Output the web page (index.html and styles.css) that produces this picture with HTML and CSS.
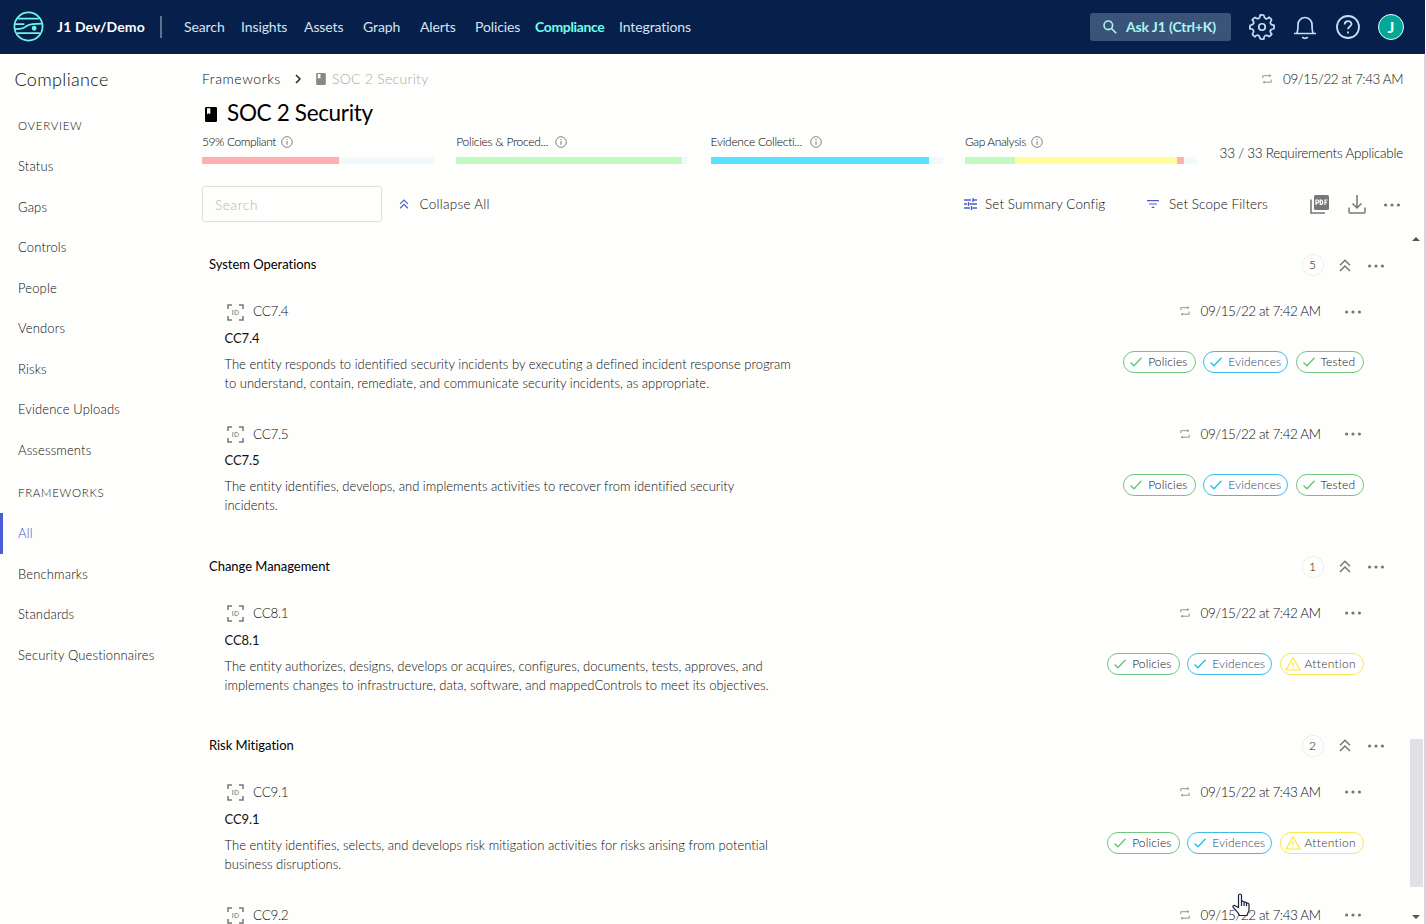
FILE: index.html
```html
<!DOCTYPE html>
<html lang="en">
<head>
<meta charset="utf-8">
<title>SOC 2 Security - Compliance</title>
<link rel="stylesheet" href="styles.css">
</head>
<body>
<svg class="sprite" aria-hidden="true">
  <symbol id="repeat" viewBox="0 0 10 10"><path d="M.8 4.2V1.7H9M7.8.4v2.4M9.2 5.6v2.6H1M2.2 7v2.4" fill="none" stroke="currentColor" stroke-width=".9"/></symbol>
  <symbol id="book" viewBox="0 0 12 15"><path fill="currentColor" fill-rule="evenodd" d="M1.2 0h9.6A1.2 1.2 0 0 1 12 1.2v12.6a1.2 1.2 0 0 1-1.2 1.2H1.2A1.2 1.2 0 0 1 0 13.8V1.2A1.2 1.2 0 0 1 1.2 0zM2 1.300v6L3.500 6.200l1.800 1.100v-6z"/></symbol>
  <symbol id="info" viewBox="0 0 12 12"><circle cx="6" cy="6" r="5.300" fill="none" stroke="currentColor" stroke-width=".9"/><path d="M6 5.200v3.600M6 3v1.100" stroke="currentColor" stroke-width="1"/></symbol>
  <symbol id="up2" viewBox="0 0 12 13"><path d="M1 6.300 6 1.300l5 5M1 12l5-5 5 5" fill="none" stroke="currentColor" stroke-width="1.500"/></symbol>
  <symbol id="dots" viewBox="0 0 18 4"><circle cx="2.600" cy="2" r="1.600" fill="currentColor"/><circle cx="9" cy="2" r="1.600" fill="currentColor"/><circle cx="15.400" cy="2" r="1.600" fill="currentColor"/></symbol>
  <symbol id="idbox" viewBox="0 0 17 17"><path d="M1 5V1h4M12 1h4v4M16 12v4h-4M5 16H1v-4" fill="none" stroke="currentColor" stroke-width="1.500"/><path d="M5.800 6v5M8 6.400v4.200h1.400c3 0 3-4.200 0-4.200z" fill="none" stroke="currentColor" stroke-width=".8"/></symbol>
  <symbol id="check" viewBox="0 0 12 10"><path d="M.5 5.500 4 8.800 11.500.8" fill="none" stroke="currentColor" stroke-width="1.300"/></symbol>
  <symbol id="warn" viewBox="0 0 16 14"><path d="M8 1 15 13H1zM8 5v4M8 10.200v1.400" fill="none" stroke="currentColor" stroke-width="1.200"/></symbol>
</svg>

<header class="topbar">
  <svg class="logo" viewBox="0 0 30 30" fill="none" stroke="#6ff5ea" stroke-width="1.700"><circle cx="15" cy="15" r="13.600"/><path d="M5 7.300h20M2 12.600h9M2 17.500c6.500 0 8.500-.8 12-3.400 2.500-1.700 5-1.900 14-1.900M4 21.300h22"/><circle cx="20.500" cy="16.700" r="1.500" fill="#6ff5ea"/></svg>
  <span class="org">J1 Dev/Demo</span>
  <span class="divider"></span>
  <nav class="topnav"><a>Search</a><a>Insights</a><a>Assets</a><a>Graph</a><a>Alerts</a><a>Policies</a><a class="on">Compliance</a><a>Integrations</a></nav>
  <div class="tools">
    <button class="ask"><svg width="14" height="14" viewBox="0 0 14 14" fill="none" stroke="currentColor" stroke-width="1.600"><circle cx="5.300" cy="5.300" r="4.300"/><path d="m8.500 8.500 4.700 4.700"/></svg>Ask J1 (Ctrl+K)</button>
    <svg class="gear" viewBox="-12 -12 24 24" fill="none" stroke="currentColor" stroke-width="1.600" stroke-linecap="round" stroke-linejoin="round"><defs><path id="tooth" d="M-1.600-10.900Q0-11.500 1.600-10.900C2.300-7.300 4-6.700 6.580-8.840"/></defs><circle r="3"/><use href="#tooth"/><use href="#tooth" transform="rotate(45)"/><use href="#tooth" transform="rotate(90)"/><use href="#tooth" transform="rotate(135)"/><use href="#tooth" transform="rotate(180)"/><use href="#tooth" transform="rotate(225)"/><use href="#tooth" transform="rotate(270)"/><use href="#tooth" transform="rotate(315)"/></svg>
    <svg class="bell" viewBox="0 0 24 26" fill="none" stroke="currentColor" stroke-width="1.700"><path d="M1 19.500h22M3.500 19.500c1.500-1.500 1.500-3 1.500-9a7 7 0 0 1 14 0c0 6 0 7.500 1.500 9M9.300 23c1.200 1.800 4.200 1.800 5.400 0"/></svg>
    <svg class="help" viewBox="0 0 24 24" fill="none" stroke="currentColor" stroke-width="1.800"><circle cx="12" cy="12" r="11"/><path d="M8.700 9.500c0-4.500 6.800-4.300 6.800-.4 0 2.500-3.500 2.300-3.500 5.100M12 16.500v2"/></svg>
    <span class="avatar">J</span>
  </div>
</header>

<div class="page">
  <aside class="sidebar">
    <h2>Compliance</h2>
    <h3>OVERVIEW</h3>
    <a>Status</a><a>Gaps</a><a>Controls</a><a>People</a><a>Vendors</a><a>Risks</a><a>Evidence Uploads</a><a>Assessments</a>
    <h3 class="second">FRAMEWORKS</h3>
    <a class="active">All</a><a>Benchmarks</a><a>Standards</a><a>Security Questionnaires</a>
  </aside>

  <main class="main">
    <div class="crumbs">
      <span>Frameworks</span>
      <svg class="chev" viewBox="0 0 6 10"><path d="m1 1 4 4-4 4" fill="none" stroke="#222" stroke-width="1.500"/></svg>
      <svg class="book-sm"><use href="#book"/></svg><span class="here">SOC 2 Security</span>
      <span class="synced"><svg class="rep"><use href="#repeat"/></svg>09/15/22 at 7:43 AM</span>
    </div>
    <h1><svg class="book-lg"><use href="#book"/></svg>SOC 2 Security</h1>

    <div class="stats">
      <div class="stat"><div class="label"><span>59% Compliant</span><svg class="info"><use href="#info"/></svg></div><div class="bar"><i class="red" style="width:59%"></i></div></div>
      <div class="stat"><div class="label"><span class="cut">Policies &amp; Proced...</span><svg class="info"><use href="#info"/></svg></div><div class="bar"><i class="green" style="width:97.400%"></i></div></div>
      <div class="stat"><div class="label"><span class="cut">Evidence Collecti...</span><svg class="info"><use href="#info"/></svg></div><div class="bar"><i class="blue" style="width:94%"></i></div></div>
      <div class="stat"><div class="label"><span>Gap Analysis</span><svg class="info"><use href="#info"/></svg></div><div class="bar"><i class="green" style="width:21.700%"></i><i class="yellow" style="width:69.600%"></i><i class="red" style="width:3%"></i></div></div>
      <div class="applicable">33 / 33 Requirements Applicable</div>
    </div>

    <div class="toolbar">
      <div class="search">Search</div>
      <span class="act collapse"><svg class="up-sm"><use href="#up2"/></svg>Collapse All</span>
      <span class="act summary"><svg width="13" height="12" viewBox="0 0 13 12" fill="none" stroke="#4b5cc8" stroke-width="1.300"><path d="M0 2h7M9.500 2H13M9 0v4M0 6h3M5.500 6H13M4.500 4v4M0 10h6M8.500 10H13M7.500 8v4"/></svg>Set Summary Config</span>
      <span class="act scope"><svg width="12" height="8" viewBox="0 0 12 8" fill="none" stroke="#4b5cc8" stroke-width="1.200"><path d="M0 .7h12M2 4h8M4.700 7.300h2.600"/></svg>Set Scope Filters</span>
      <svg class="pdf" viewBox="0 0 19 19"><path d="M1 4.500V18h14" fill="none" stroke="#777" stroke-width="1.600"/><rect x="4" y="0" width="15" height="15" rx="1.500" fill="#777"/><path d="M6 10V5h1.500a1.400 1.400 0 0 1 0 2.800H6M10.300 5v4.500h.8c2 0 2-4.500 0-4.500zM15 10V5h2.500M15 7.500h2" fill="none" stroke="#fff" stroke-width="1.200"/></svg>
      <svg class="down" viewBox="0 0 18 19" fill="none" stroke="#777" stroke-width="1.500"><path d="M9 0v13M4.500 8.500 9 13l4.500-4.500M1 12.500V17q0 1 1 1h14q1 0 1-1v-4.500"/></svg>
      <svg class="dots"><use href="#dots"/></svg>
    </div>

    <div class="list">
      <section>
        <div class="sec-head"><h4>System Operations</h4><span class="count">5</span><svg class="up"><use href="#up2"/></svg><svg class="dots"><use href="#dots"/></svg></div>
        <article>
          <div class="row"><svg class="idbox"><use href="#idbox"/></svg><span class="ref">CC7.4</span><span class="when"><svg class="rep"><use href="#repeat"/></svg>09/15/22 at 7:42 AM</span><svg class="dots"><use href="#dots"/></svg></div>
          <div class="body"><div class="copy"><h5>CC7.4</h5><p>The entity responds to identified security incidents by executing a defined incident response program<br>to understand, contain, remediate, and communicate security incidents, as appropriate.</p></div>
          <div class="tags"><span class="tag g"><svg class="check"><use href="#check"/></svg>Policies</span><span class="tag b"><svg class="check"><use href="#check"/></svg>Evidences</span><span class="tag g t"><svg class="check"><use href="#check"/></svg>Tested</span></div></div>
        </article>
        <article>
          <div class="row"><svg class="idbox"><use href="#idbox"/></svg><span class="ref">CC7.5</span><span class="when"><svg class="rep"><use href="#repeat"/></svg>09/15/22 at 7:42 AM</span><svg class="dots"><use href="#dots"/></svg></div>
          <div class="body"><div class="copy"><h5>CC7.5</h5><p>The entity identifies, develops, and implements activities to recover from identified security<br>incidents.</p></div>
          <div class="tags"><span class="tag g"><svg class="check"><use href="#check"/></svg>Policies</span><span class="tag b"><svg class="check"><use href="#check"/></svg>Evidences</span><span class="tag g t"><svg class="check"><use href="#check"/></svg>Tested</span></div></div>
        </article>
      </section>
      <section>
        <div class="sec-head"><h4>Change Management</h4><span class="count">1</span><svg class="up"><use href="#up2"/></svg><svg class="dots"><use href="#dots"/></svg></div>
        <article>
          <div class="row"><svg class="idbox"><use href="#idbox"/></svg><span class="ref">CC8.1</span><span class="when"><svg class="rep"><use href="#repeat"/></svg>09/15/22 at 7:42 AM</span><svg class="dots"><use href="#dots"/></svg></div>
          <div class="body"><div class="copy"><h5>CC8.1</h5><p>The entity authorizes, designs, develops or acquires, configures, documents, tests, approves, and<br>implements changes to infrastructure, data, software, and mappedControls to meet its objectives.</p></div>
          <div class="tags"><span class="tag g"><svg class="check"><use href="#check"/></svg>Policies</span><span class="tag b"><svg class="check"><use href="#check"/></svg>Evidences</span><span class="tag y"><svg class="warn"><use href="#warn"/></svg>Attention</span></div></div>
        </article>
      </section>
      <section>
        <div class="sec-head"><h4>Risk Mitigation</h4><span class="count">2</span><svg class="up"><use href="#up2"/></svg><svg class="dots"><use href="#dots"/></svg></div>
        <article>
          <div class="row"><svg class="idbox"><use href="#idbox"/></svg><span class="ref">CC9.1</span><span class="when"><svg class="rep"><use href="#repeat"/></svg>09/15/22 at 7:43 AM</span><svg class="dots"><use href="#dots"/></svg></div>
          <div class="body"><div class="copy"><h5>CC9.1</h5><p class="wide">The entity identifies, selects, and develops risk mitigation activities for risks arising from potential<br>business disruptions.</p></div>
          <div class="tags"><span class="tag g"><svg class="check"><use href="#check"/></svg>Policies</span><span class="tag b"><svg class="check"><use href="#check"/></svg>Evidences</span><span class="tag y"><svg class="warn"><use href="#warn"/></svg>Attention</span></div></div>
        </article>
        <article class="last">
          <div class="row"><svg class="idbox"><use href="#idbox"/></svg><span class="ref">CC9.2</span><span class="when"><svg class="rep"><use href="#repeat"/></svg>09/15/22 at 7:43 AM</span><svg class="dots"><use href="#dots"/></svg></div>
        </article>
      </section>
    </div>
  </main>
  <div class="scroll"><i class="arrow-up"></i><i class="thumb"></i><i class="arrow-down"></i></div>
</div>
<svg class="cursor" viewBox="0 0 18 24"><path d="M6.500 14.500V2.500c0-2 3-2 3 0v6.300c.8-1 2.500-.6 2.600.6.900-.7 2.300-.3 2.400.9.900-.5 2.500 0 2.500 1.500V17c0 1.500-1.500 3-2 5.500H7.500C7 20.500 4 17.500 1.200 14.300c-.8-1.300.8-2.500 2-1.500zM9.500 9v4M12.100 9.400V13M14.500 10.300v3" fill="#fff" stroke="#14203a" stroke-width="1.200"/></svg>
</body>
</html>
```

FILE: styles.css
```css
* { box-sizing: border-box; }
body {
  margin: 0; height: 924px; overflow: hidden; position: relative;
  background: #fefefc; color: #0c0c0c;
  font: 300 14px/20px Lato, "Open Sans", sans-serif;
}
h1, h2, h3, h4, h5, p { margin: 0; font-weight: inherit; font-size: inherit; }
svg { display: block; flex: none; }
.sprite { position: absolute; width: 0; height: 0; }

.topbar { height: 54px; display: flex; align-items: center; padding: 0 21px 0 13px; background: #06204b; color: #d5e3f0; width: 1425px; }
.logo { width: 31px; height: 31px; margin-top: -1px; }
.org { width: 88px; margin-left: 13px; font-weight: 700; color: #fff; white-space: nowrap; letter-spacing: .12px; }
.divider { width: 2px; height: 22px; margin: 0 22px 0 15px; background: #5d7290; }
.topnav { display: grid; grid-template-columns: 57px 63px 59px 57px 55px 60px 84px 74px; font-weight: 400; white-space: nowrap; letter-spacing: -.1px; }
.topnav .on { color: #6ffff0; font-weight: 700; letter-spacing: -.35px; }
.tools { margin-left: auto; display: flex; align-items: center; }
.ask { width: 141px; height: 28px; border: 0; border-radius: 3px; background: #3c5379; color: #a8f7f5; font: 700 14px/20px Lato, sans-serif; letter-spacing: -.13px; display: flex; align-items: center; gap: 9px; padding: 0 0 0 13px; white-space: nowrap; }
.gear { width: 26px; height: 26px; margin-left: 18px; color: #c4e0f7; }
.bell { width: 24px; height: 26px; margin-left: 18px; color: #c4e0f7; }
.help { width: 24px; height: 24px; margin-left: 19px; color: #c4e0f7; }
.avatar { width: 26px; height: 26px; margin-left: 18px; border-radius: 50%; background: #05a897; border: 1px solid #e4fff9; color: #fff; font-size: 16px; font-weight: 700; text-align: center; line-height: 24px; }

.page { display: flex; height: 870px; }
.sidebar { width: 202px; flex: none; padding-top: 11px; }
.sidebar h2 { height: 29px; line-height: 29px; padding-left: 14.500px; font-size: 18px; letter-spacing: .35px; }
.sidebar h3 { height: 40px; margin-top: 12px; line-height: 40px; padding-left: 18px; font-size: 11.500px; letter-spacing: .7px; }
.sidebar h3.second { margin-top: 3px; }
.sidebar a { display: block; height: 40.500px; line-height: 41px; padding-left: 18px; font-size: 13px; letter-spacing: .15px; }
.sidebar a.active { border-left: 3px solid #4b5cd8; padding-left: 15px; color: #3b4cc8; }

.main { width: 1202px; flex: none; display: flex; flex-direction: column; }
.crumbs { display: flex; align-items: center; height: 20px; margin-top: 15px; letter-spacing: .55px; }
.chev { width: 6px; height: 10px; margin: 0 14.500px; }
.book-sm { width: 10px; height: 12px; margin-right: 6px; color: #888; }
.here { color: #aaa; letter-spacing: .28px; }
.synced { margin-left: auto; margin-right: 1px; display: flex; align-items: center; gap: 11px; font-size: 13.500px; letter-spacing: -.43px; }
.rep { width: 10px; height: 10px; color: #888; }
h1 { display: flex; align-items: center; height: 30px; margin-top: 9px; padding-left: 3px; gap: 10px; font-size: 22.500px; line-height: 30px; font-weight: 400; color: #000; letter-spacing: -.33px; }
.book-lg { width: 12px; height: 15px; margin-top: 2px; }

.stats { display: flex; gap: 22.300px; height: 36px; margin-top: 4px; white-space: nowrap; }
.stat { width: 232px; flex: none; }
.label { display: flex; align-items: center; gap: 5px; height: 20px; font-size: 12px; letter-spacing: -.4px; color: #000; }
.label .cut { width: 94px; letter-spacing: -.28px; }
.info { width: 12px; height: 12px; color: #777; }
.bar { display: flex; height: 7px; margin-top: 5px; background: #f1fafa; }
.red { background: #ffb1b1; }
.green { background: #c1f9c2; }
.blue { background: #58e2ff; }
.yellow { background: #fffe9b; }
.applicable { margin-left: auto; margin-right: 1px; line-height: 42px; font-size: 13.500px; letter-spacing: -.25px; }

.toolbar { display: flex; align-items: center; height: 36px; margin-top: 18px; white-space: nowrap; font-size: 13.500px; letter-spacing: .1px; }
.search { width: 180px; height: 36px; border: 1px solid #dedede; border-radius: 3px; padding: 0 12px; line-height: 37px; color: #b4b4b4; letter-spacing: .7px; }
.act { display: flex; align-items: center; }
.act.collapse { margin-left: 17px; gap: 10.500px; letter-spacing: .25px; }
.act.summary { margin-left: auto; width: 183px; gap: 8px; }
.act.scope { width: 162.500px; gap: 10px; }
.up-sm { width: 10px; height: 10px; color: #4b5cc8; }
.pdf { width: 19px; height: 19px; }
.down { width: 18px; height: 19px; margin: 0 17px 0 19.500px; }
.dots { width: 18px; height: 4px; color: #777; }
.toolbar .dots { margin-right: 3px; margin-top: 2px; }

.list { padding-left: 7px; margin-top: 19px; }
section { padding-bottom: 9.500px; }
.sec-head { height: 47px; display: flex; align-items: center; padding-right: 19.500px; }
.sec-head h4 { margin-right: auto; padding-bottom: .8px; font-size: 13px; font-weight: 400; color: #000; letter-spacing: -.03px; }
.count { width: 22px; height: 22px; border: 1px dotted #ddd; border-radius: 50%; text-align: center; font-size: 12px; line-height: 20px; margin-top: 1px; }
.up { width: 12px; height: 13px; margin: 1px 16px 0 15px; color: #777; }
.sec-head .dots { margin-top: 2px; }
article { height: 122.500px; padding: 13px 42px 0 15.500px; }
article.last { height: 36px; padding-top: 13.600px; }
section:last-child { padding-bottom: 0; }
.row { height: 20px; display: flex; align-items: center; }
.idbox { width: 17px; height: 17px; margin: 2px 9.500px 0 2px; color: #777; }
.ref { font-size: 13.500px; letter-spacing: -.3px; }
.when { margin-left: auto; display: flex; align-items: center; gap: 10.500px; font-size: 13.500px; letter-spacing: -.43px; }
.row .dots { margin-left: 23.500px; margin-top: 1px; }
.body { display: flex; justify-content: space-between; margin-right: -1.500px; }
h5 { height: 20px; margin-top: 7px; font-weight: 400; font-size: 13px; letter-spacing: -.1px; color: #111; }
article + article h5 { margin-top: 6.400px; }
.copy p { margin-top: 7px; font-size: 13px; line-height: 19px; letter-spacing: .015px; white-space: nowrap; }
.copy p.wide { letter-spacing: .04px; }
.tags { display: flex; gap: 7.200px; margin-top: 30px; }
.tag { height: 22px; display: flex; align-items: center; gap: 6px; padding-left: 6px; border: 1px solid; border-radius: 11px; font-size: 12px; letter-spacing: .15px; background: #fff; }
.check { width: 12px; height: 10px; }
.warn { width: 16px; height: 14px; margin-right: -2px; }
.tag.g { width: 73px; border-color: #70c780; }
.tag.g.t { width: 68px; }
.tag.b { width: 85px; border-color: #3fbce8; color: #1d4566; }
.tag.y { width: 84px; border-color: #f9e94b; color: #333320; padding-left: 4px; letter-spacing: .3px; }
.g svg { color: #5cc870; }
.b svg { color: #16c6ea; }
.y svg { color: #fbe72f; }

.scroll { width: 22px; flex: none; border-right: 2px solid #d5d5dc; display: flex; flex-direction: column; align-items: center; padding: 183px 2px 5px 6px; }
.arrow-up { border: 4px solid transparent; border-top: 0; border-bottom: 4px solid #555; }
.thumb { width: 13px; height: 148px; margin-top: 498px; background: #e1e1e5; }
.arrow-down { margin-top: auto; border: 4px solid transparent; border-bottom: 0; border-top: 4px solid #555; }
.cursor { position: absolute; left: 1232px; top: 893px; width: 18px; height: 24px; }
```
